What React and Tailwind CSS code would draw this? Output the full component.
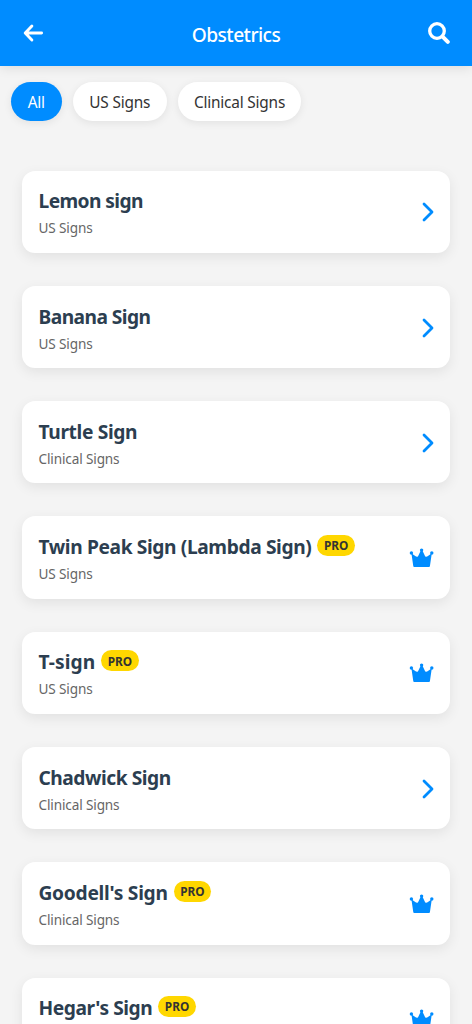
const filters = [
  { label: "All", active: true, width: "w-[50.5px]" },
  { label: "US Signs", width: "w-[94.5px]" },
  { label: "Clinical Signs", width: "w-[123px]" },
];

const signs = [
  { title: "Lemon sign", category: "US Signs", tracking: "tracking-[-0.6px]" },
  { title: "Banana Sign", category: "US Signs", tracking: "tracking-[-0.55px]" },
  { title: "Turtle Sign", category: "Clinical Signs", tracking: "tracking-[-0.35px]" },
  { title: "Twin Peak Sign (Lambda Sign)", category: "US Signs", tracking: "tracking-[-0.38px]", pro: true },
  { title: "T-sign", category: "US Signs", tracking: "tracking-[0.05px]", pro: true },
  { title: "Chadwick Sign", category: "Clinical Signs", tracking: "tracking-[-0.47px]" },
  { title: "Goodell's Sign", category: "Clinical Signs", tracking: "tracking-[-0.27px]", pro: true },
  { title: "Hegar's Sign", category: "Clinical Signs", tracking: "tracking-[-0.45px]", pro: true },
];

function ArrowLeftIcon() {
  return (
    <svg viewBox="0 0 22 22" className="h-[22px] w-[22px]" fill="none" stroke="currentColor" strokeWidth="2.9" strokeLinecap="round" strokeLinejoin="round">
      <path d="M9.9 4.1 3.2 11l6.7 6.9M3.6 11h16" />
    </svg>
  );
}

function SearchIcon() {
  return (
    <svg viewBox="0 0 22 22" className="h-[22px] w-[22px]" fill="none" stroke="currentColor" strokeLinecap="round">
      <circle cx="9" cy="9" r="7.3" strokeWidth="3.3" />
      <path d="m14.8 14.8 5 5" strokeWidth="4" />
    </svg>
  );
}

function ChevronIcon() {
  return (
    <svg viewBox="0 0 14 22" className="h-[22px] w-[14px] text-[#008cff]" fill="none" stroke="currentColor" strokeWidth="2.8" strokeLinecap="round" strokeLinejoin="round">
      <path d="m4 3 8 8-8 8" />
    </svg>
  );
}

function CrownIcon() {
  return (
    <svg viewBox="0 0 25 22" className="h-[22px] w-[25px] text-[#008cff]" fill="currentColor">
      <circle cx="2.4" cy="6" r="1.7" />
      <circle cx="12.6" cy="3.1" r="1.7" />
      <circle cx="22.8" cy="6" r="1.7" />
      <path d="M2.4 6.2 6.6 9.3Q8.2 10.4 9.2 8.9L11.8 3.6h1.6L16 8.9q1 1.5 2.6.4l4.2-3.1-1.9 13.1q-.1.8-.9.8H5.2q-.8 0-.9-.8Z" />
    </svg>
  );
}

function Header() {
  return (
    <header className="flex h-[66px] shrink-0 items-center justify-between bg-[#008cff] px-[22px] text-white shadow-[0_2px_11px_rgba(0,0,0,0.1)]">
      <button className="flex w-[22px]" aria-label="Back">
        <ArrowLeftIcon />
      </button>
      <h1 className="pt-[4px] text-[19.2px] leading-[26px] font-medium tracking-[-0.55px]">Obstetrics</h1>
      <button className="flex w-[22px]" aria-label="Search">
        <SearchIcon />
      </button>
    </header>
  );
}

function Filter({ label, active, width }) {
  return (
    <button
      className={`${width} h-[39.6px] rounded-full pt-[2px] text-[15.4px] tracking-[-0.2px] whitespace-nowrap shadow-[0_2px_9px_rgba(0,0,0,0.08)] ${
        active ? "bg-[#008cff] text-white" : "bg-white text-[#333]"
      }`}
    >
      {label}
    </button>
  );
}

function SignCard({ title, category, tracking, pro }) {
  return (
    <li className="flex h-[82.3px] shrink-0 items-center justify-between rounded-[13.2px] bg-white px-[16.5px] shadow-[0_4px_13px_rgba(0,0,0,0.08)]">
      <div className="pt-[2px]">
        <div className="flex h-[28px] items-center">
          <h2 className={`text-[19.2px] leading-[28px] font-bold text-[#2c3e50] ${tracking}`}>{title}</h2>
          {pro && (
            <span className="mb-[3px] ml-[6px] flex h-[21px] w-[37.5px] items-center justify-center rounded-full bg-[#ffd700] pt-[1px] text-[11.8px] font-bold text-[#333]">
              PRO
            </span>
          )}
        </div>
        <p className="mt-[3px] text-[13.6px] leading-[20px] tracking-[-0.14px] text-[#666]">{category}</p>
      </div>
      <span className="pt-[1px]">{pro ? <CrownIcon /> : <ChevronIcon />}</span>
    </li>
  );
}

export default function App() {
  return (
    <div className="flex h-screen flex-col overflow-hidden bg-[#f4f4f4] font-['Noto_Sans',sans-serif]">
      <Header />
      <nav className="flex shrink-0 gap-[11px] px-[11px] pt-[15.5px]">
        {filters.map((f) => (
          <Filter key={f.label} {...f} />
        ))}
      </nav>
      <ul className="flex flex-col gap-[33px] px-[22px] pt-[49.5px]">
        {signs.map((s) => (
          <SignCard key={s.title} {...s} />
        ))}
      </ul>
    </div>
  );
}
